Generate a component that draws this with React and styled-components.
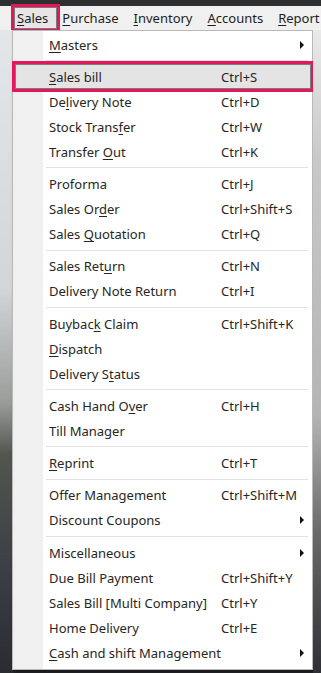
import React from 'react';
import styled, { createGlobalStyle } from 'styled-components';

const Global = createGlobalStyle`
  html, body { margin: 0; padding: 0; }
  body {
    width: 321px;
    height: 673px;
    overflow: hidden;
    background: #2a2c30;
    font-family: "Noto Sans", "Open Sans", sans-serif;
  }
`;

const Screen = styled.div`
  width: 321px;
  height: 673px;
  display: flex;
  flex-direction: column;
  overflow: hidden;
`;

const TitleBar = styled.div`
  height: 6px;
  background: #2e2f31;
  flex: none;
`;

const MenuBar = styled.div`
  height: 24px;
  flex: none;
  background: #f0f0f0;
  display: flex;
  align-items: center;
  padding-left: 14px;
  gap: 2px;
  font-size: 13px;
  color: #1e1e1e;
  white-space: nowrap;
`;

const BarItem = styled.div`
  height: 22px;
  display: flex;
  align-items: center;
  padding: 0 10px 0 3px;
  box-sizing: border-box;
  flex: none;
  ${p =>
    p.$open &&
    `
    background: #e6e6e6;
    border: 1px solid #7a7a7a;
    padding: 0 8px 0 2px;
    outline: 3px solid #e3175a;
    outline-offset: 0px;
  `}
`;

const Mn = styled.span`
  text-decoration: underline;
  text-underline-offset: 2px;
`;

const Stage = styled.div`
  flex: 1;
  display: flex;
  align-items: flex-start;
`;

const Backdrop = styled.div`
  align-self: stretch;
  width: ${p => p.$w}px;
  flex: none;
  background: ${p => p.$bg};
`;

const Menu = styled.div`
  width: 301px;
  flex: none;
  background: linear-gradient(to right, #f0f0f0 0, #f0f0f0 30px, #fff 30px);
  border: 1px solid #b9b9b9;
  box-sizing: border-box;
  padding: 1px 0 4px;
  box-shadow: 2px 3px 3px rgba(0, 0, 0, 0.45);
  font-size: 13px;
  color: #262626;
`;

const Row = styled.div`
  height: 25px;
  display: grid;
  grid-template-columns: 36px 172px 78px 1fr;
  align-items: center;
  white-space: nowrap;
  ${p =>
    p.$active &&
    `
    background: #e4e4e4;
    box-shadow: inset 0 0 0 1px #7c7c7c;
    outline: 3px solid #e3175a;
    outline-offset: 0px;
    margin: 0 1px 0 2px;
    grid-template-columns: 34px 172px 78px 1fr;
  `}
`;

const Label = styled.span`
  grid-column: 2;
`;

const Keys = styled.span`
  grid-column: 3;
`;

const Arrow = styled.span`
  grid-column: 4;
  justify-self: start;
  margin-left: 1px;
  width: 0;
  height: 0;
  border-top: 4px solid transparent;
  border-bottom: 4px solid transparent;
  border-left: 4px solid #111;
`;

const Sep = styled.div`
  height: 7.25px;
  display: flex;
  align-items: center;
  padding: 0 4px 0 33px;
  &::after {
    content: '';
    flex: 1;
    height: 1px;
    background: #e2e2e2;
  }
`;

const u = (text, i) =>
  i < 0 ? (
    text
  ) : (
    <>
      {text.slice(0, i)}
      <Mn>{text[i]}</Mn>
      {text.slice(i + 1)}
    </>
  );

const groups = [
  [{ t: 'Masters', m: 0, sub: true }],
  [
    { t: 'Sales bill', m: 0, k: 'Ctrl+S', active: true },
    { t: 'Delivery Note', m: 2, k: 'Ctrl+D' },
    { t: 'Stock Transfer', m: 11, k: 'Ctrl+W' },
    { t: 'Transfer Out', m: 9, k: 'Ctrl+K' },
  ],
  [
    { t: 'Proforma', m: -1, k: 'Ctrl+J' },
    { t: 'Sales Order', m: 8, k: 'Ctrl+Shift+S' },
    { t: 'Sales Quotation', m: 6, k: 'Ctrl+Q' },
  ],
  [
    { t: 'Sales Return', m: 9, k: 'Ctrl+N' },
    { t: 'Delivery Note Return', m: -1, k: 'Ctrl+I' },
  ],
  [
    { t: 'Buyback Claim', m: 6, k: 'Ctrl+Shift+K' },
    { t: 'Dispatch', m: 0 },
    { t: 'Delivery Status', m: 10 },
  ],
  [
    { t: 'Cash Hand Over', m: 11, k: 'Ctrl+H' },
    { t: 'Till Manager', m: -1 },
  ],
  [{ t: 'Reprint', m: 0, k: 'Ctrl+T' }],
  [
    { t: 'Offer Management', m: -1, k: 'Ctrl+Shift+M' },
    { t: 'Discount Coupons', m: -1, sub: true },
  ],
  [
    { t: 'Miscellaneous', m: -1, sub: true },
    { t: 'Due Bill Payment', m: -1, k: 'Ctrl+Shift+Y' },
    { t: 'Sales Bill [Multi Company]', m: -1, k: 'Ctrl+Y' },
    { t: 'Home Delivery', m: -1, k: 'Ctrl+E' },
    { t: 'Cash and shift Management', m: 0, sub: true },
  ],
];

const App = () => (
  <Screen>
    <Global />
    <TitleBar />
    <MenuBar>
      <BarItem $open>{u('Sales', 0)}</BarItem>
      <BarItem>{u('Purchase', 0)}</BarItem>
      <BarItem>{u('Inventory', 0)}</BarItem>
      <BarItem>{u('Accounts', 0)}</BarItem>
      <BarItem>{u('Report', 0)}</BarItem>
    </MenuBar>
    <Stage>
      <Backdrop
        $w={12}
        $bg="linear-gradient(to bottom, #e4e7ea 0, #d3d6d9 40%, #9a9c9a 58%, #52564f 66%, #3a3d44 85%, #2a2c32 100%)"
      />
      <Menu>
        {groups.map((g, gi) => (
          <React.Fragment key={gi}>
            {gi > 0 && <Sep />}
            {g.map(item => (
              <Row key={item.t} $active={item.active}>
                <Label>{u(item.t, item.m)}</Label>
                {item.k && <Keys>{item.k}</Keys>}
                {item.sub && <Arrow />}
              </Row>
            ))}
          </React.Fragment>
        ))}
      </Menu>
      <Backdrop
        $w={8}
        $bg="linear-gradient(to bottom, #e9e9e9 0, #c9c9c9 20%, #b4b4b4 60%, #6a6a6a 78%, #2e3036 100%)"
      />
    </Stage>
  </Screen>
);

export default App;
